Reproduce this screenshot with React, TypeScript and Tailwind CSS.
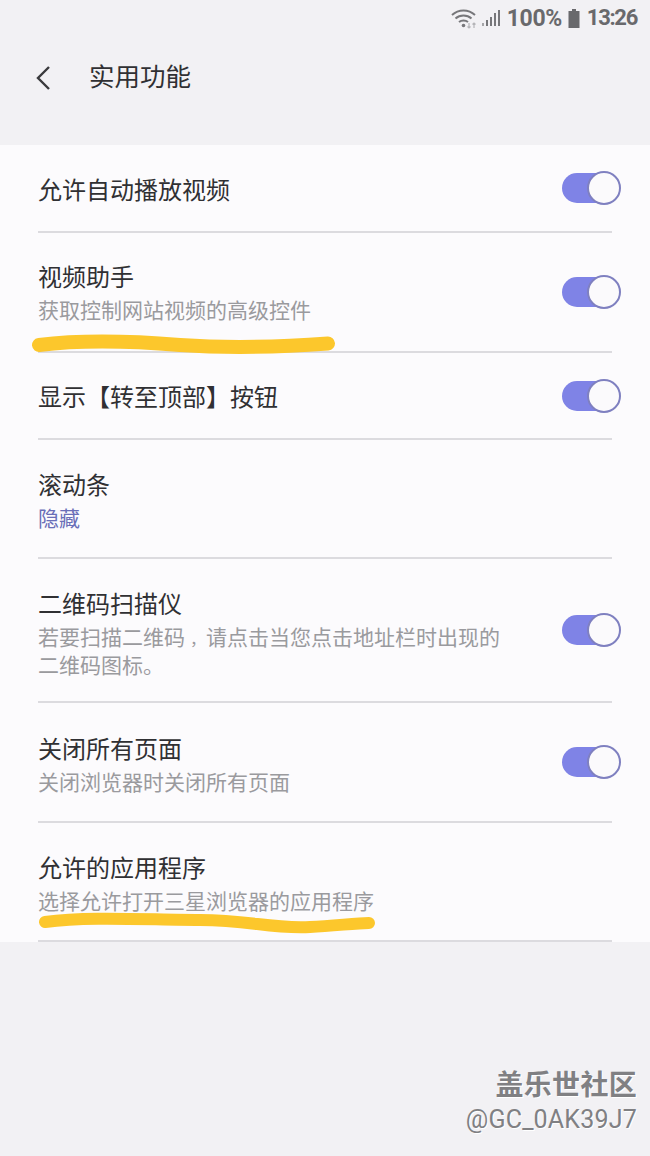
import type { ReactNode } from 'react';

const font = "font-['Roboto','Noto_Sans_CJK_SC',sans-serif]";

function Toggle() {
  return (
    <div className="relative h-[34px] w-[59px]">
      <div className="absolute left-0 top-[2px] h-[30px] w-[50px] rounded-full bg-[#7f83e6]" />
      <div className="absolute right-0 top-0 h-[34px] w-[34px] rounded-full border-2 border-[#7f80c0] bg-[#fbfafc]" />
    </div>
  );
}

interface RowProps {
  title: string;
  sub?: ReactNode;
  sub2?: string;
  subColor?: string;
  toggle?: boolean;
  height: string;
  titleTop: string;
}

function Row({ title, sub, sub2, subColor = 'text-[#9a9a9e]', toggle, height, titleTop }: RowProps) {
  return (
    <div className={`mx-[38px] flex justify-between border-b-2 border-[#dcdbdf] ${height}`}>
      <div className={titleTop}>
        <div className="text-[24px] leading-[34px] text-[#303033]">{title}</div>
        {sub && <div className={`mt-[3px] text-[21px] leading-[27px] ${subColor}`}>{sub}</div>}
        {sub2 && <div className="text-[21px] leading-[27px] text-[#9a9a9e]">{sub2}</div>}
      </div>
      {toggle && (
        <div className="-mr-[9px] self-center">
          <Toggle />
        </div>
      )}
    </div>
  );
}

function StatusBar() {
  return (
    <div className="flex h-[36px] items-center justify-end pr-[13px] text-[#69696c]">
      <svg width="27" height="21" viewBox="0 0 27 21" fill="none" className="mr-[3px]">
        <path d="M1 7C7.5 1 17.5 1 24 7" stroke="#77777a" strokeWidth="2" />
        <path d="M4.5 10.5C9 6.5 16 6.5 20.5 10.5" stroke="#77777a" strokeWidth="2" />
        <path d="M8 14C10.5 12 14.5 12 17 14" stroke="#77777a" strokeWidth="2" />
        <circle cx="12.5" cy="17.5" r="1.8" fill="#77777a" />
        <path d="M18 15V20M16.5 18.5L18 20L19.5 18.5" stroke="#b5b5b8" strokeWidth="1.2" />
        <path d="M23 20V15M21.5 16.5L23 15L24.5 16.5" stroke="#b5b5b8" strokeWidth="1.2" />
      </svg>
      <svg width="20" height="18" viewBox="0 0 20 18" className="mr-[6px]" fill="#77777a">
        <rect x="1" y="14" width="2" height="3" fill="#a5a5a8" />
        <rect x="5" y="11" width="2" height="6" />
        <rect x="9" y="8" width="2" height="9" />
        <rect x="13" y="4" width="2" height="13" />
        <rect x="17" y="1" width="2" height="16" />
      </svg>
      <span className="mr-[6px] text-[23px] font-bold leading-none tracking-[-0.4px]">100%</span>
      <svg width="12" height="19" viewBox="0 0 12 19" className="mr-[7px]" fill="#69696c">
        <path d="M4 0H8V2H11.5V19H0.5V2H4Z" />
      </svg>
      <span className="text-[22px] font-bold leading-none tracking-[-1.3px]">13:26</span>
    </div>
  );
}

export default function App() {
  return (
    <div className={`relative h-[1156px] w-[650px] overflow-hidden bg-[#f2f1f4] ${font}`}>
      <StatusBar />
      <div className="flex h-[83px] items-center">
        <svg width="16" height="26" viewBox="0 0 16 26" fill="none" className="ml-[35px]">
          <path d="M14 2L3 13L14 24" stroke="#3a3a3d" strokeWidth="2.4" />
        </svg>
        <span className="ml-[38px] text-[25.5px] leading-none text-[#303033]">实用功能</span>
      </div>
      <div className="mt-[26px] bg-[#fcfbfd]">
        <Row title="允许自动播放视频" toggle height="h-[88px]" titleTop="pt-[29px]" />
        <Row title="视频助手" sub="获取控制网站视频的高级控件" toggle height="h-[120px]" titleTop="pt-[28px]" />
        <Row title="显示【转至顶部】按钮" toggle height="h-[87px]" titleTop="pt-[28px]" />
        <Row title="滚动条" sub="隐藏" subColor="text-[#6a6fb8]" height="h-[119px]" titleTop="pt-[29px]" />
        <Row
          title="二维码扫描仪"
          sub={
            <>
              若要扫描二维码<span className="pl-[5px] text-[16px]">，</span>请点击当您点击地址栏时出现的
            </>
          }
          sub2="二维码图标。"
          toggle
          height="h-[144px]"
          titleTop="pt-[29px]"
        />
        <Row title="关闭所有页面" sub="关闭浏览器时关闭所有页面" toggle height="h-[120px]" titleTop="pt-[30px]" />
        <Row title="允许的应用程序" sub="选择允许打开三星浏览器的应用程序" height="h-[119px]" titleTop="pt-[29px]" />
      </div>

      {/* hand drawn highlights */}
      <svg className="absolute left-0 top-0" width="650" height="1156" fill="none">
        <path
          d="M39 345C80 340 130 341 180 345C225 348 280 347 328 343.5"
          stroke="#fcc72c"
          strokeWidth="14"
          strokeLinecap="round"
        />
        <path
          d="M45 922C90 916 150 920 200 920C250 920 270 929 310 927C335 926 355 923 369 923"
          stroke="#fcc72c"
          strokeWidth="12"
          strokeLinecap="round"
        />
      </svg>

      <div className="absolute bottom-[20px] right-[13px] text-right text-[#808083] [text-shadow:1px_1px_0_#ffffff]">
        <div className="text-[28px] font-bold leading-[36px] tracking-[0.3px]">盖乐世社区</div>
        <div className="text-[25px] leading-[32px] tracking-[0.2px]">@GC_0AK39J7</div>
      </div>
    </div>
  );
}
